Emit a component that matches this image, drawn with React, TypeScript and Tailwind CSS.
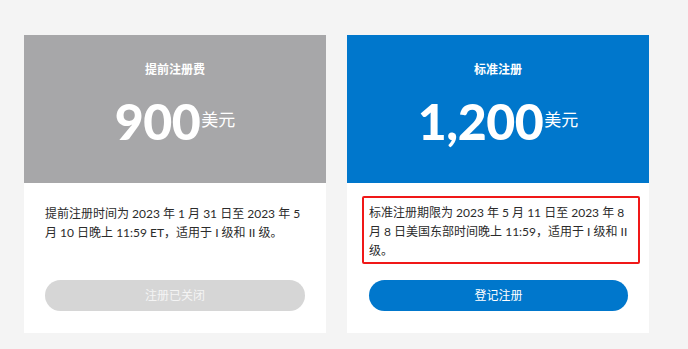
const font = "font-['Lato','Noto_Sans_CJK_SC',sans-serif]";

type Plan = {
  title: string;
  price: string;
  note: string;
  action: string;
  open: boolean;
};

const plans: Plan[] = [
  {
    title: "提前注册费",
    price: "900",
    note: "提前注册时间为 2023 年 1 月 31 日至 2023 年 5 月 10 日晚上 11:59 ET，适用于 I 级和 II 级。",
    action: "注册已关闭",
    open: false,
  },
  {
    title: "标准注册",
    price: "1,200",
    note: "标准注册期限为 2023 年 5 月 11 日至 2023 年 8 月 8 日美国东部时间晚上 11:59，适用于 I 级和 II 级。",
    action: "登记注册",
    open: true,
  },
];

function PlanCard({ plan }: { plan: Plan }) {
  return (
    <div className="w-[302px] bg-white flex flex-col">
      <div
        className={
          plan.open
            ? "h-[148px] bg-[#0077cc] flex flex-col items-center pt-[27px] text-white"
            : "h-[148px] bg-[#a7a7a9] flex flex-col items-center pt-[27px] text-white"
        }
      >
        <div className="text-[12px] leading-[16px] font-bold">{plan.title}</div>
        <div className="flex items-start mt-[18px]">
          <span className="text-[50px] leading-none font-black tracking-[-0.5px]">{plan.price}</span>
          <span className="text-[17px] leading-none mt-[15px] ml-[1px]">美元</span>
        </div>
      </div>
      <div className="pt-[13px] pl-[15px] pr-[9px] pb-[22px]">
        <div
          className={
            plan.open
              ? "h-[68px] border-2 border-[#f01818] rounded-[2px] pl-[5px] pr-[9px] pt-[5px]"
              : "h-[68px] border-2 border-transparent pl-[4px] pr-[9px] pt-[6px]"
          }
        >
          <p className="w-[260px] text-[12px] leading-[19px] text-[#2b2b2b]">{plan.note}</p>
        </div>
        <button
          className={
            plan.open
              ? "mt-[16px] ml-[7px] w-[259px] h-[31px] rounded-full bg-[#0077cc] text-white text-[12px]"
              : "mt-[16px] ml-[6px] w-[260px] h-[31px] rounded-full bg-[#d6d6d6] text-[#f4f4f4] text-[12px]"
          }
        >
          {plan.action}
        </button>
      </div>
    </div>
  );
}

export default function App() {
  return (
    <div className={`${font} w-[688px] h-[349px] bg-[#f4f4f4] pt-[35px] pl-[24px] flex items-start gap-[21px]`}>
      {plans.map((p) => (
        <PlanCard key={p.title} plan={p} />
      ))}
    </div>
  );
}
